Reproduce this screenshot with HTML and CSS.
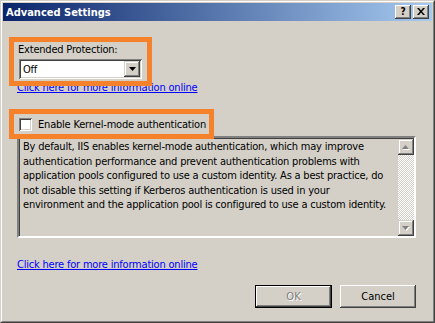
FILE: index.html
```html
<!DOCTYPE html>
<html>
<head>
<meta charset="utf-8">
<link rel="stylesheet" href="styles.css">
</head>
<body>
<div class="window">
  <div class="frame">
    <div class="titlebar">
      <span class="title">Advanced Settings</span>
      <div class="tbtns">
        <span class="tbtn help">?</span>
        <span class="tbtn">
          <svg width="8" height="7" viewBox="0 0 8 7"><path d="M0 0h2l2 2.5L6 0h2L5 3.5 8 7H6L4 4.5 2 7H0l3-3.5z" fill="#000"/></svg>
        </span>
      </div>
    </div>
    <div class="content">
      <div class="label">Extended Protection:</div>
      <div class="combo">
        <span class="combo-val">Off</span>
        <span class="ddbtn"><svg width="7" height="4" viewBox="0 0 7 4"><path d="M0 0h7L3.5 4z" fill="#000"/></svg></span>
      </div>
      <a class="link link1" href="#">Click here for more information online</a>
      <label class="check"><span class="cbox"></span><span>Enable Kernel-mode authentication</span></label>
      <div class="textbox">
        <div class="tbtext">By default, IIS enables kernel-mode authentication, which may improve<br>authentication performance and prevent authentication problems with<br>application pools configured to use a custom identity. As a best practice, do<br>not disable this setting if Kerberos authentication is used in your<br>environment and the application pool is configured to use a custom identity.</div>
        <div class="sb">
          <span class="sbbtn"><svg width="8" height="5" viewBox="0 0 8 5"><path d="M1 5h7L4.5 1z" fill="#fff"/><path d="M0 4h7L3.5 0z" fill="#808080"/></svg></span>
          <span class="track"></span>
          <span class="sbbtn"><svg width="8" height="5" viewBox="0 0 8 5"><path d="M1 1h7L4.5 5z" fill="#fff"/><path d="M0 0h7L3.5 4z" fill="#808080"/></svg></span>
        </div>
      </div>
      <a class="link link2" href="#">Click here for more information online</a>
      <div class="buttons">
        <button class="btn default" disabled>OK</button>
        <button class="btn">Cancel</button>
      </div>
    </div>
  </div>
  <div class="hl hl1"></div>
  <div class="hl hl2"></div>
</div>
</body>
</html>
```
FILE: styles.css
```css
* { box-sizing: border-box; }
html, body { margin: 0; padding: 0; }
body {
  width: 435px;
  height: 323px;
  overflow: hidden;
  background: #d4d0c8;
  font-family: "DejaVu Sans Condensed", "DejaVu Sans", sans-serif;
  font-stretch: condensed;
  font-size: 11px;
  color: #000;
}
.window {
  position: relative;
  width: 435px;
  height: 323px;
  border: 1px solid;
  border-color: #d4d0c8 #404040 #404040 #d4d0c8;
  background: #d4d0c8;
}
.frame {
  height: 100%;
  border: 1px solid;
  border-color: #fff #808080 #808080 #fff;
  padding: 1px;
  display: flex;
  flex-direction: column;
}
.titlebar {
  height: 18px;
  flex: none;
  background: linear-gradient(to right, #0a246a, #a6caf0);
  display: flex;
  align-items: center;
  justify-content: space-between;
  padding: 0 3px 0 3px;
}
.title {
  color: #fff;
  font-weight: bold;
  font-size: 11px;
  line-height: 13px;
}
.tbtns { display: flex; gap: 2px; }
.tbtn {
  width: 16px;
  height: 14px;
  background: #d4d0c8;
  box-shadow: inset -1px -1px #404040, inset 1px 1px #fff, inset -2px -2px #808080;
  display: flex;
  align-items: center;
  justify-content: center;
  padding-bottom: 1px;
}
.help {
  font-family: "DejaVu Sans", sans-serif;
  font-weight: bold;
  font-size: 10px;
  line-height: 10px;
}
.content {
  flex: 1;
  padding: 22px 0 0 14px;
  display: flex;
  flex-direction: column;
  align-items: flex-start;
  letter-spacing: -0.2px;
}
.label { line-height: 13px; margin-left: 1px; }
.combo {
  margin-top: 3px;
  margin-left: 2px;
  width: 123px;
  height: 20px;
  background: #fff;
  box-shadow: inset 1px 1px #808080, inset -1px -1px #fff, inset 2px 2px #404040, inset -2px -2px #d4d0c8;
  display: flex;
  align-items: center;
  justify-content: space-between;
  padding: 2px;
}
.combo-val { padding-left: 2px; line-height: 13px; }
.ddbtn {
  width: 16px;
  height: 16px;
  background: #d4d0c8;
  box-shadow: inset -1px -1px #404040, inset 1px 1px #d4d0c8, inset -2px -2px #808080, inset 2px 2px #fff;
  display: flex;
  align-items: center;
  justify-content: center;
}
.link {
  color: #0000ff;
  text-decoration: underline;
  line-height: 13px;
}
.link1 { margin-top: 2px; }
.check {
  margin-top: 23px;
  margin-left: 2px;
  display: flex;
  align-items: center;
  gap: 6px;
  line-height: 15px;
}
.cbox {
  width: 13px;
  height: 13px;
  background: #fff;
  box-shadow: inset 1px 1px #808080, inset -1px -1px #fff, inset 2px 2px #404040, inset -2px -2px #d4d0c8;
}
.textbox {
  margin-top: 4px;
  width: 399px;
  height: 102px;
  background: #d4d0c8;
  border: 2px solid;
  border-color: #808080 #fff #fff #808080;
  box-shadow: inset 1px 1px #404040, inset -1px -1px #d4d0c8;
  display: flex;
}
.tbtext {
  flex: 1;
  white-space: nowrap;
  overflow: hidden;
  padding: 2px 0 0 4px;
  line-height: 14.5px;
}
.sb {
  width: 16px;
  flex: none;
  display: flex;
  flex-direction: column;
  padding: 1px 0 0 0;
}
.sbbtn {
  width: 16px;
  height: 16px;
  flex: none;
  background: #d4d0c8;
  box-shadow: inset -1px -1px #404040, inset 1px 1px #d4d0c8, inset -2px -2px #808080, inset 2px 2px #fff;
  display: flex;
  align-items: center;
  justify-content: center;
}
.track {
  flex: 1;
  background: repeating-conic-gradient(#fff 0 25%, #d4d0c8 0 50%) 0 0 / 2px 2px;
}
.link2 { margin-top: 20px; }
.buttons {
  margin-top: 14px;
  width: 399px;
  display: flex;
  justify-content: flex-end;
  gap: 8px;
}
.btn {
  width: 76px;
  height: 23px;
  font: inherit;
  font-family: inherit;
  font-size: 11px;
  letter-spacing: 0;
  color: #000;
  background: #d4d0c8;
  border: none;
  padding: 0;
  box-shadow: inset -1px -1px #404040, inset 1px 1px #fff, inset -2px -2px #808080;
}
.btn.default {
  width: 77px;
  color: #808080;
  text-shadow: 1px 1px #fff;
  border: 1px solid #000;
}
.hl {
  position: absolute;
  border: 5px solid #f5822a;
}
.hl1 { left: 8px; top: 36px; width: 143px; height: 49px; }
.hl2 { left: 8px; top: 108px; width: 205px; height: 30px; }
```
